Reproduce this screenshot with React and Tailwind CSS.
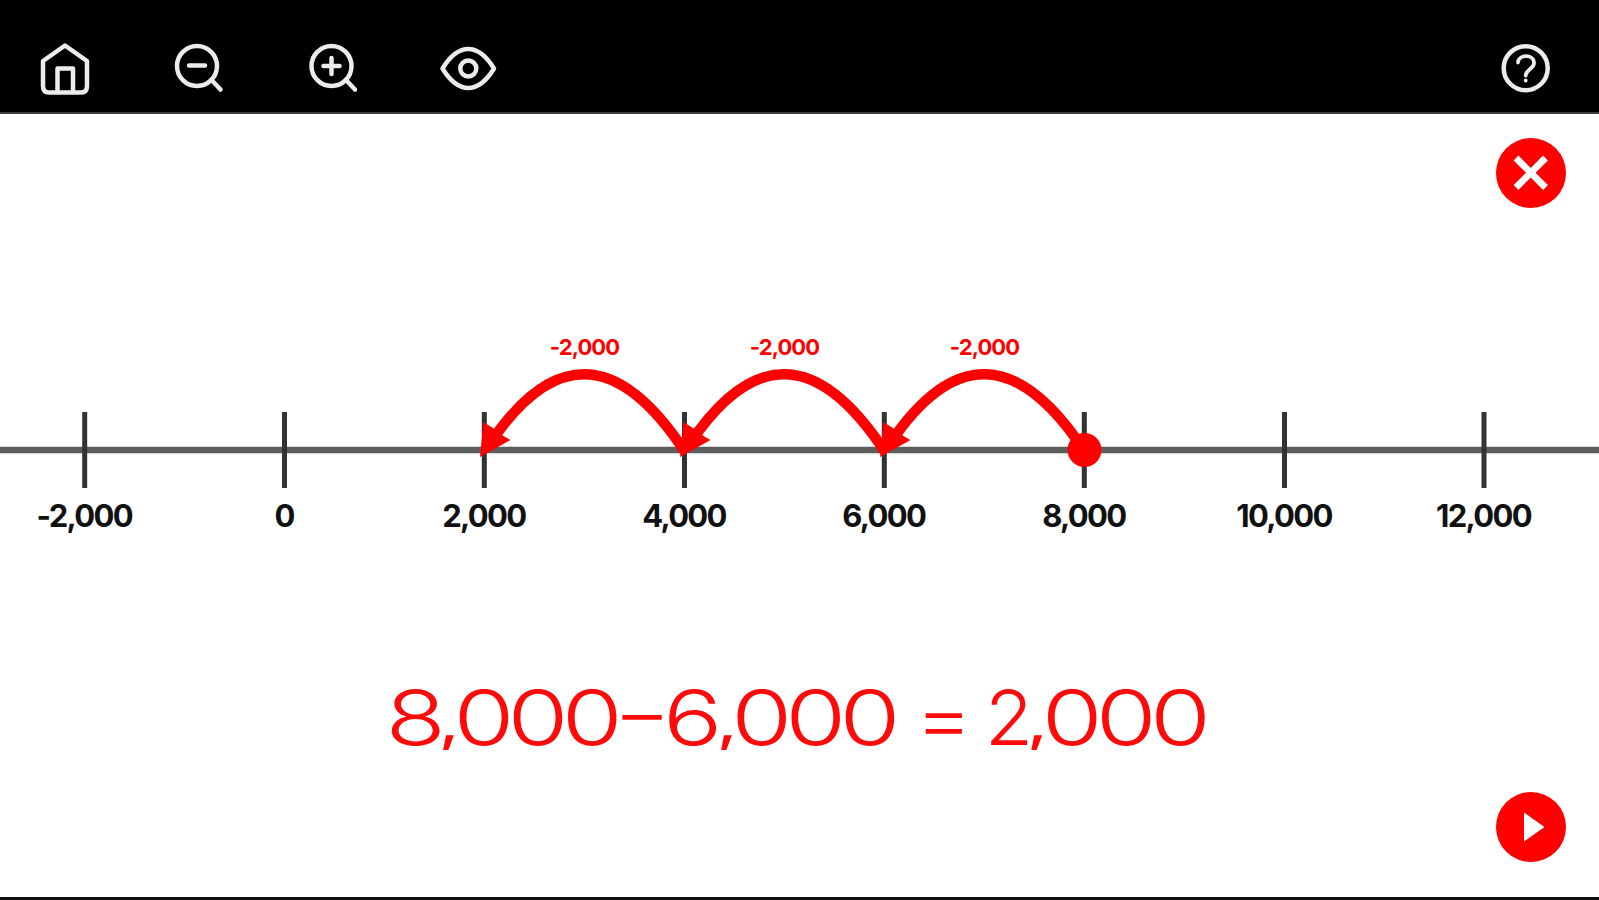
import React from "react";

const ticks = [
  { x: 84.7, label: "-2,000" },
  { x: 284.5, label: "0" },
  { x: 484.3, label: "2,000" },
  { x: 684.5, label: "4,000" },
  { x: 884.3, label: "6,000" },
  { x: 1084.3, label: "8,000" },
  { x: 1284.5, label: "10,000" },
  { x: 1484, label: "12,000" },
];

// every jump goes from right to left
const jumps = [
  { from: 1084.5, to: 884.5, label: "-2,000" },
  { from: 884.5, to: 684.5, label: "-2,000" },
  { from: 684.5, to: 484.5, label: "-2,000" },
];

const Icon = ({ children }) => (
  <svg
    viewBox="0 0 60 60"
    className="size-[60px]"
    fill="none"
    stroke="#ececec"
    strokeWidth="4.5"
    strokeLinecap="round"
    strokeLinejoin="round"
  >
    {children}
  </svg>
);

const Header = () => (
  <header className="flex h-[114px] items-start justify-between border-b-2 border-[#3c3c3c] bg-black pt-[38px] pr-[43px] pl-[35px]">
    <div className="flex gap-[74px]">
      <button aria-label="Home">
        <Icon>
          <path d="M30 7.5 L52 23 V48 Q52 54.5 46 54.5 H14 Q8 54.5 8 48 V23 Z" />
          <path d="M22.5 54 V30.5 H38 V54" />
        </Icon>
      </button>
      <button aria-label="Zoom out">
        <Icon>
          <circle cx="28" cy="28" r="20" />
          <path d="M20 27.5 H36 M42.5 42 L51.5 51.5" />
        </Icon>
      </button>
      <button aria-label="Zoom in">
        <Icon>
          <circle cx="28.5" cy="28" r="20" />
          <path d="M20.5 28 H36.5 M28.5 20 V36 M43 42 L52 51.5" />
        </Icon>
      </button>
      <button aria-label="Show">
        <Icon>
          <path d="M5.5 30.5 Q17.5 11 31.3 11 Q45 11 57 30.5 Q45 50 31.3 50 Q17.5 50 5.5 30.5 Z" />
          <circle cx="31.3" cy="30.5" r="8" />
        </Icon>
      </button>
    </div>
    <button aria-label="Help">
      <Icon>
        <circle cx="29.7" cy="30.2" r="22" />
        <path
          d="M22 24.5 C22.5 16 38 16 38 25 C38 31 29.7 31.5 29.7 37.5 M29.7 42.5 V42.6"
          strokeWidth="3.8"
        />
      </Icon>
    </button>
  </header>
);

const NumberLine = () => (
  <svg viewBox="0 0 1599 240" className="h-[240px] w-full shrink-0">
    {/* axis */}
    <path d="M0 130 H1599" stroke="#5e5e5e" strokeWidth="6.5" />
    {ticks.map(({ x, label }) => (
      <g key={label}>
        <path d={`M${x} 92 V168`} stroke="#333333" strokeWidth="5" />
        <text
          x={x - 0.5}
          y="206.5"
          textAnchor="middle"
          className="fill-[#111111] font-['Inter',sans-serif] text-[31px] font-bold tracking-[-1.7px]"
        >
          {label}
        </text>
      </g>
    ))}

    {/* jumps */}
    {jumps.map(({ from, to, label }) => (
      <g key={from} className="fill-[#ff0000]">
        <path
          d={`M${from} 131 Q${(from + to) / 2 + 1} -19 ${to + 5} 124`}
          fill="none"
          stroke="#ff0000"
          strokeWidth="10.5"
        />
        <path d={`M${to - 4.5} 137 L${to - 1} 102 L${to + 10} 109 L${to + 19} 116 L${to + 26} 120 Z`} />
        <text
          x={from - 100}
          y="35"
          textAnchor="middle"
          className="font-['Inter',sans-serif] text-[22px] font-bold tracking-[-0.9px]"
        >
          {label}
        </text>
      </g>
    ))}
    <circle cx="1084.5" cy="130" r="17" fill="#ff0000" />
  </svg>
);

const Comma = () => (
  <span className="inline-block w-[11px] -translate-y-[4px] text-[52px] font-medium">,</span>
);

const Equation = () => (
  <div className="flex h-[110px] items-center justify-center pr-[9px]">
    <p className="scale-x-[1.3] font-['Inter',sans-serif] text-[76px] leading-none font-light tracking-[-5.3px] whitespace-pre text-[#ff0a0a]">
      8<Comma />000
      <span className="-mr-[6px] -ml-[2px] inline-block origin-left -translate-y-[6px] scale-x-[0.9]">−</span>
      <span className="mr-[1px]">6</span>
      <Comma />
      000 <span className="inline-block origin-left scale-x-[0.9]">=</span>
      <span className="-ml-[6px]"> </span>
      <span className="-mr-[9px] inline-block origin-left scale-x-[0.8]">2</span>
      <Comma />
      000
    </p>
  </div>
);

const RoundButton = ({ label, children }) => (
  <button aria-label={label} className="size-[70px] rounded-full bg-[#ff0000]">
    <svg viewBox="0 0 70 70" className="size-[70px]">
      {children}
    </svg>
  </button>
);

const App = () => {
  return (
    <div className="flex h-[900px] w-full flex-col overflow-hidden bg-white">
      <Header />
      <main className="flex flex-1 flex-col border-b-[3px] border-[#111111]">
        <div className="flex h-[206px] shrink-0 justify-end pt-6 pr-[33px]">
          <RoundButton label="Close">
            <path d="M20 20 L49.5 49.5 M49.5 20 L20 49.5" stroke="white" strokeWidth="6.8" />
          </RoundButton>
        </div>
        <NumberLine />
        <div className="h-[102px] shrink-0" />
        <Equation />
        <div className="flex justify-end pt-[20px] pr-[33px]">
          <RoundButton label="Play">
            <path d="M28 20.5 L48.5 35 L28 49.5 Z" fill="white" />
          </RoundButton>
        </div>
      </main>
    </div>
  );
};

export default App;
